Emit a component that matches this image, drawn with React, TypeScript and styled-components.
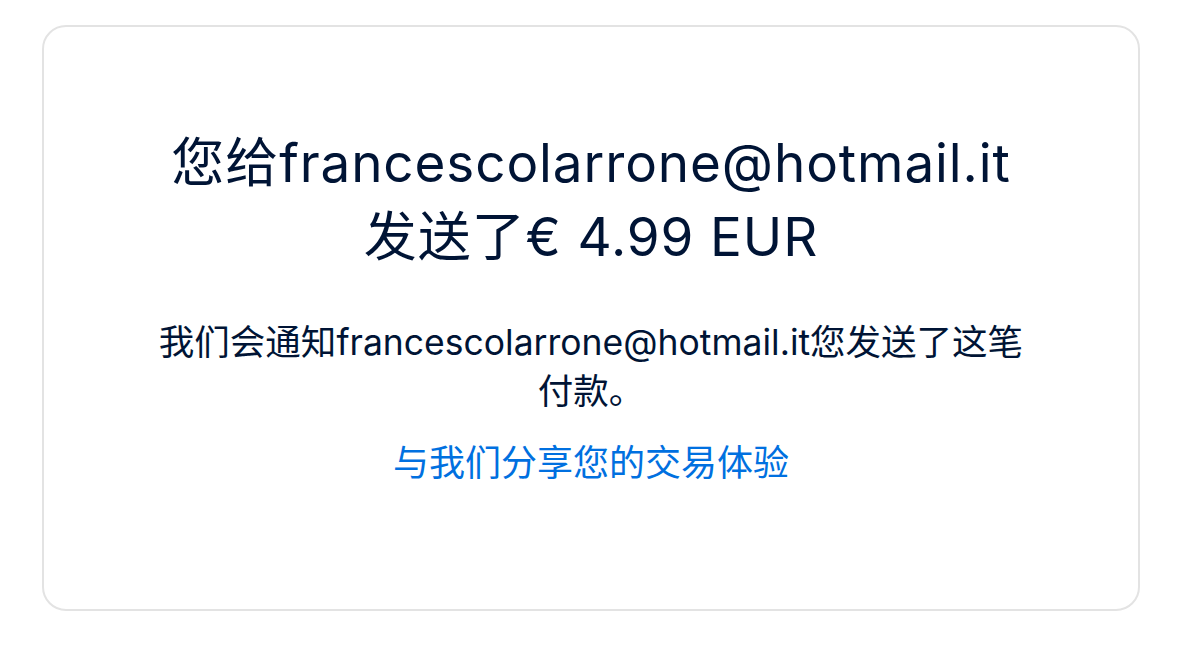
import styled, { createGlobalStyle } from "styled-components";

const GlobalStyle = createGlobalStyle`
    html, body {
        margin: 0;
        padding: 0;
        background: #ffffff;
    }
    body {
        font-family: Inter, "Noto Sans CJK SC", sans-serif;
        color: #001435;
    }
`

export default function App() {
    const email = "francescolarrone@hotmail.it";
    return (
        <>
            <GlobalStyle />
            <Page>
                <Card>
                    <Title>
                        您给{email}发送了€ 4.99 EUR
                    </Title>
                    <Text>我们会通知{email}您发送了这笔付款。</Text>
                    <Link href="#">与我们分享您的交易体验</Link>
                </Card>
            </Page>
        </>
    );
}

const Page = styled.main`
    padding: 25px 50px 50px 42px;
`

const Card = styled.section`
    box-sizing: border-box;
    height: 586px;
    border: 2px solid #e3e3e3;
    border-radius: 24px;
    padding-top: 99px;
    display: flex;
    flex-direction: column;
    align-items: center;
`

const Title = styled.h1`
    max-width: 870px;
    margin: 0;
    font-size: 53px;
    line-height: 74px;
    font-weight: 400;
    letter-spacing: 0.9px;
    text-align: center;
    color: #001435;
`

const Text = styled.p`
    max-width: 880px;
    margin: 44px 0 0;
    font-size: 35.5px;
    line-height: 49px;
    text-align: center;
    color: #001435;
`

const Link = styled.a`
    margin-top: 22px;
    font-size: 36px;
    line-height: 50px;
    color: #0070e0;
    text-decoration: none;
`
